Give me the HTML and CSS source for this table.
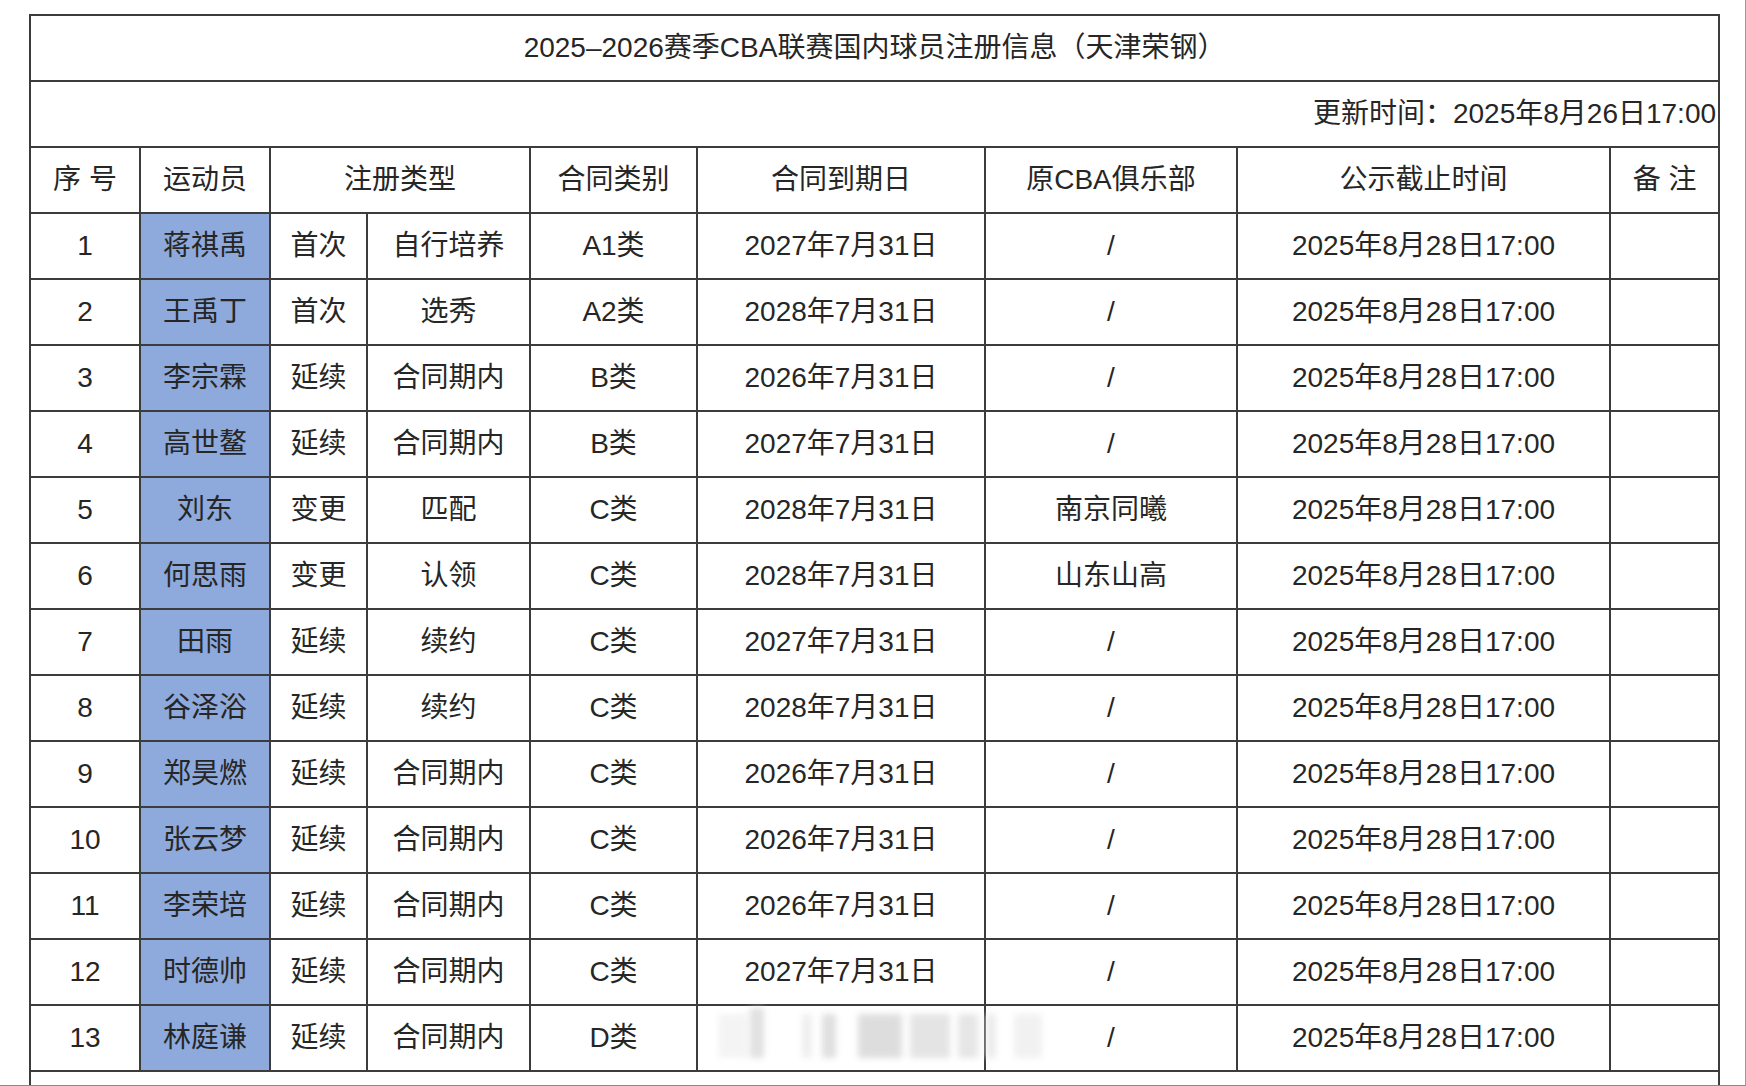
FILE: index.html
```html
<!DOCTYPE html>
<html lang="zh-CN">
<head>
<meta charset="utf-8">
<title>2025-2026赛季CBA联赛国内球员注册信息（天津荣钢）</title>
<link rel="stylesheet" href="styles.css">
</head>
<body>
<div class="page">
  <table class="reg">
    <colgroup>
      <col class="c1"><col class="c2"><col class="c3"><col class="c4"><col class="c5"><col class="c6"><col class="c7"><col class="c8"><col class="c9">
    </colgroup>
    <tr class="row"><td colspan="9" class="title">2025–2026赛季CBA联赛国内球员注册信息（天津荣钢）</td></tr>
    <tr class="row"><td colspan="9" class="update">更新时间：2025年8月26日17:00</td></tr>
    <tr class="row head">
      <td>序 号</td><td>运动员</td><td colspan="2">注册类型</td><td>合同类别</td><td>合同到期日</td><td>原CBA俱乐部</td><td>公示截止时间</td><td>备 注</td>
    </tr>
    <tr class="row"><td>1</td><td class="name">蒋祺禹</td><td>首次</td><td>自行培养</td><td>A1类</td><td>2027年7月31日</td><td>/</td><td>2025年8月28日17:00</td><td></td></tr>
    <tr class="row"><td>2</td><td class="name">王禹丁</td><td>首次</td><td>选秀</td><td>A2类</td><td>2028年7月31日</td><td>/</td><td>2025年8月28日17:00</td><td></td></tr>
    <tr class="row"><td>3</td><td class="name">李宗霖</td><td>延续</td><td>合同期内</td><td>B类</td><td>2026年7月31日</td><td>/</td><td>2025年8月28日17:00</td><td></td></tr>
    <tr class="row"><td>4</td><td class="name">高世鳌</td><td>延续</td><td>合同期内</td><td>B类</td><td>2027年7月31日</td><td>/</td><td>2025年8月28日17:00</td><td></td></tr>
    <tr class="row"><td>5</td><td class="name">刘东</td><td>变更</td><td>匹配</td><td>C类</td><td>2028年7月31日</td><td>南京同曦</td><td>2025年8月28日17:00</td><td></td></tr>
    <tr class="row"><td>6</td><td class="name">何思雨</td><td>变更</td><td>认领</td><td>C类</td><td>2028年7月31日</td><td>山东山高</td><td>2025年8月28日17:00</td><td></td></tr>
    <tr class="row"><td>7</td><td class="name">田雨</td><td>延续</td><td>续约</td><td>C类</td><td>2027年7月31日</td><td>/</td><td>2025年8月28日17:00</td><td></td></tr>
    <tr class="row"><td>8</td><td class="name">谷泽浴</td><td>延续</td><td>续约</td><td>C类</td><td>2028年7月31日</td><td>/</td><td>2025年8月28日17:00</td><td></td></tr>
    <tr class="row"><td>9</td><td class="name">郑昊燃</td><td>延续</td><td>合同期内</td><td>C类</td><td>2026年7月31日</td><td>/</td><td>2025年8月28日17:00</td><td></td></tr>
    <tr class="row"><td>10</td><td class="name">张云梦</td><td>延续</td><td>合同期内</td><td>C类</td><td>2026年7月31日</td><td>/</td><td>2025年8月28日17:00</td><td></td></tr>
    <tr class="row"><td>11</td><td class="name">李荣培</td><td>延续</td><td>合同期内</td><td>C类</td><td>2026年7月31日</td><td>/</td><td>2025年8月28日17:00</td><td></td></tr>
    <tr class="row"><td>12</td><td class="name">时德帅</td><td>延续</td><td>合同期内</td><td>C类</td><td>2027年7月31日</td><td>/</td><td>2025年8月28日17:00</td><td></td></tr>
    <tr class="row"><td>13</td><td class="name">林庭谦</td><td>延续</td><td>合同期内</td><td>D类</td><td class="wm-cell"><div class="wm"><i class="b1"></i><i class="b2"></i><i class="b3"></i><i class="b4"></i><i class="b5"></i><i class="b6"></i><i class="b7"></i><i class="b8"></i><i class="b9"></i></div></td><td>/</td><td>2025年8月28日17:00</td><td></td></tr>
    <tr class="row"><td colspan="9" class="tail"></td></tr>
  </table>
</div>
</body>
</html>
```
FILE: styles.css
```css
html, body {
  margin: 0;
  padding: 0;
  background: #fff;
  overflow: hidden;
  height: 1086px;
}
.page {
  position: relative;
  width: 1746px;
  height: 1086px;
  border-right: 1px solid #9a9a9a;
  border-bottom: 1px solid #8a8a8a;
  padding: 14px 0 0 29px;
  box-sizing: border-box;
  overflow: hidden;
}
.reg {
  border-collapse: collapse;
  table-layout: fixed;
  width: 1689px;
  font-family: "Liberation Sans", "Noto Sans CJK SC", sans-serif;
  font-size: 28px;
  color: #262626;
}
.c1 { width: 110px; }
.c2 { width: 130px; }
.c3 { width: 97px; }
.c4 { width: 163px; }
.c5 { width: 167px; }
.c6 { width: 288px; }
.c7 { width: 252px; }
.c8 { width: 373px; }
.c9 { width: 109px; }
.reg td {
  border: 2px solid #3c3c3c;
  text-align: center;
  vertical-align: middle;
  padding: 0 0 1px 0;
  line-height: 1.2;
  white-space: nowrap;
}
.row { height: 66px; }
.reg td.update {
  text-align: right;
  padding-right: 2px;
}
.reg td.name {
  background: #8ea9db;
}
.reg td.tail {
  border-bottom: none;
}
.wm-cell {
  position: relative;
}
.wm {
  position: absolute;
  left: 16px;
  top: 2px;
  width: 344px;
  height: 54px;
  filter: blur(3px);
  z-index: 2;
  opacity: 0.85;
}
.wm i {
  position: absolute;
  top: 6px;
  bottom: 4px;
  background: #e6e6e6;
}
.wm .b1 { left: 4px; width: 30px; background: #f3f3f3; }
.wm .b2 { left: 36px; width: 14px; background: #dcdcdc; top: 0; }
.wm .b3 { left: 88px; width: 10px; background: #ececec; }
.wm .b4 { left: 108px; width: 14px; background: #dadada; }
.wm .b5 { left: 144px; width: 44px; background: #d8d8d8; }
.wm .b6 { left: 196px; width: 40px; background: #e0e0e0; }
.wm .b7 { left: 244px; width: 20px; background: #e2e2e2; }
.wm .b8 { left: 272px; width: 10px; background: #e8e8e8; }
.wm .b9 { left: 300px; width: 28px; background: #efefef; }
```
